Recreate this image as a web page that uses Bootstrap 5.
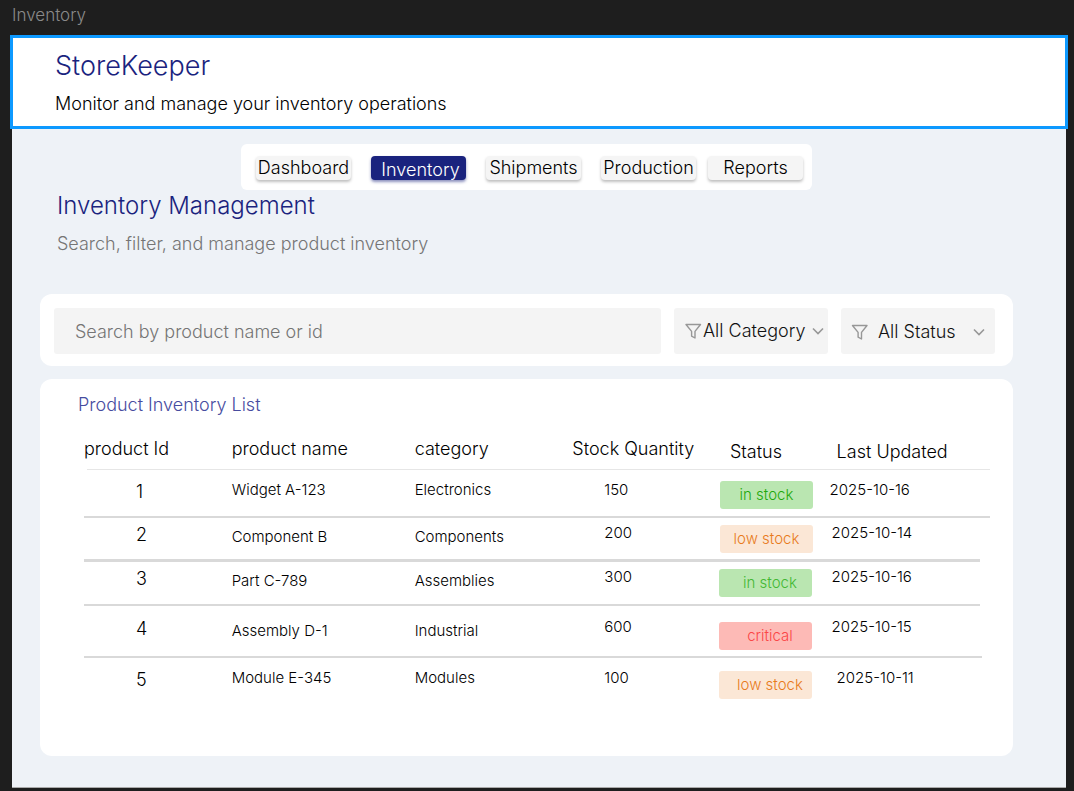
<!DOCTYPE html>
<html lang="en">
<head>
<meta charset="utf-8">
<meta name="viewport" content="width=device-width, initial-scale=1">
<title>StoreKeeper – Inventory</title>
<link href="https://cdn.jsdelivr.net/npm/bootstrap@5.3.0/dist/css/bootstrap.min.css" rel="stylesheet">
<style>
  :root { --navy: #1a237e; --field: #f4f4f4; }
  body { background: #1e1e1e; color: #000; font-family: Inter, "Liberation Sans", sans-serif; font-size: 18px; font-weight: 300; line-height: 26px; }
  .canvas { padding: 0 8px 4px 12px; }
  .frame-label { color: #8a8a8a; font-size: 17px; line-height: 20px; padding: 5px 0 12px; }
  .frame { background: #eef2f7; border-bottom: 1px solid #aaa; }
  .app-header { background: #fff; outline: 3px solid #0d99ff; outline-offset: -1px; padding: 12px 43px 10px; }
  .app-header h1 { color: var(--navy); font-size: 27px; font-weight: 300; line-height: 34px; margin-bottom: 8px; }
  .app-main { padding: 17px 53px 31px 28px; }
  .tabs { background: #fff; border-radius: 6px; padding: 12px 9px 10px 15px; gap: 20px; }
  .tab-btn { width: 95px; height: 24px; padding: 0; border: 0; border-radius: 4px; background: #f5f5f5; color: #000; font-size: 18px; font-weight: 300; line-height: 24px; white-space: nowrap; box-shadow: 0 2px 3px rgba(0,0,0,.25); }
  .tab-btn:hover { background: #e8e8e8; color: #000; }
  .tab-btn.active, .tab-btn.active:hover { background: var(--navy); color: #fff; padding: 3px 0 0 4px; line-height: 21px; box-shadow: 0 2px 3px rgba(26,35,126,.5); }
  .tab-btn:last-child { margin-left: -8px; }
  .page-head { padding-left: 17px; margin-bottom: 37px; }
  .page-head h2 { color: var(--navy); font-size: 24px; font-weight: 300; line-height: 32px; margin-bottom: 9px; }
  .page-head p { color: #757575; }
  .panel { background: #fff; border-radius: 12px; }
  .filters { padding: 14px 18px 12px 14px; gap: 13px; margin-bottom: 13px; }
  .field { background: var(--field); border: 0; border-radius: 3px; height: 46px; }
  .search { flex: 1 1 0; min-width: 0; padding: 0 21px; font-size: 18px; font-weight: 300; color: #000; }
  .search::placeholder { color: #757575; opacity: 1; }
  .picker { flex: 0 0 154px; padding: 2px 10px 0; }
  .picker-wide { padding: 0 4px 0 10px; }
  .picker select { appearance: none; border: 0; background: transparent; padding: 0; flex: 1 1 0; min-width: 0; font-size: 18px; font-weight: 300; color: #111; }
  .picker svg { flex: none; pointer-events: none; fill: none; stroke: #979797; }
  .list-panel { padding: 13px 23px 42px 44px; }
  .list-panel h3 { color: #474c9f; font-size: 18px; font-weight: 300; line-height: 26px; margin: 0 0 20px -6px; }
  .stock { --bs-table-bg: transparent; --bs-table-color: #000; table-layout: fixed; font-size: 15px; font-weight: 300; line-height: 20px; margin: 0; }
  .stock > :not(caption) > * > * { border: 0; padding: var(--top, 10px) 0 0; vertical-align: top; white-space: nowrap; }
  .stock th { font-size: 18px; font-weight: 300; --top: 1px; }
  .stock th.low { --top: 4px; }
  .stock th.state { padding-left: 10px; }
  .stock tr { background: linear-gradient(#d9d9d9, #d9d9d9) no-repeat left bottom / var(--rule-w, 100%) var(--rule, 2px); }
  .stock thead tr { height: 32px; --rule: 1px; background-image: linear-gradient(#e6e6e6, #e6e6e6); background-position: right bottom; --rule-w: calc(100% - 3px); }
  .stock tbody tr { height: 48px; --chip: 11px; }
  .stock tbody tr.tight { height: 44px; --top: 5px; --chip: 7px; --rule-w: calc(100% - 10px); }
  .stock tbody tr.ruled { --rule: 3px; }
  .stock tbody tr.roomy { height: 52px; --top: 11px; --chip: 16px; --rule-w: calc(100% - 8px); }
  .stock tbody tr:last-child { height: 56px; --chip: 13px; --rule: 0px; }
  .stock tbody td.num { font-size: 18px; padding: calc(var(--top, 10px) + 2px) 0 0 52px; }
  .stock .tight td.item, .stock .roomy td.item { padding-top: calc(var(--top) + 4px); }
  .stock td.qty { padding-left: 32px; }
  .stock tbody td.state { padding-top: var(--chip); }
  .stock .tight td.date, .stock .roomy td.date { padding-left: 2px; }
  .stock tbody tr:last-child td.date, .stock th.date { padding-left: 7px; }
  .chip { display: block; width: 93px; height: 28px; border-radius: 3px; line-height: 27px; text-align: center; }
  .chip-in { background: #bae6b1; color: #1fa90c; }
  .chip-in-soft { background: #bae6b1; color: #43b834; padding-left: 9px; }
  .chip-low { background: #fbe7d6; color: #e87b1c; }
  .chip-critical { background: #fdbab6; color: #fb4646; padding-left: 9px; }
  .chip-shift { padding-left: 9px; }
  .later .chip { margin-left: -1px; }
</style>
<script src="https://cdn.jsdelivr.net/npm/bootstrap@5.3.0/dist/js/bootstrap.bundle.min.js"></script>
</head>
<body>
<div class="canvas">
  <div class="frame-label">Inventory</div>
  <div class="frame">
    <header class="app-header">
      <h1>StoreKeeper</h1>
      <p class="mb-0">Monitor and manage your inventory operations</p>
    </header>
    <main class="app-main">
      <div class="d-flex justify-content-center">
        <nav class="tabs d-flex" aria-label="Sections">
          <button type="button" class="btn tab-btn">Dashboard</button>
          <button type="button" class="btn tab-btn active" aria-current="page">Inventory</button>
          <button type="button" class="btn tab-btn">Shipments</button>
          <button type="button" class="btn tab-btn">Production</button>
          <button type="button" class="btn tab-btn">Reports</button>
        </nav>
      </div>
      <div class="page-head">
        <h2>Inventory Management</h2>
        <p class="mb-0">Search, filter, and manage product inventory</p>
      </div>
      <form class="panel filters d-flex">
        <input type="search" class="field search" placeholder="Search by product name or id" aria-label="Search by product name or id">
        <div class="field picker picker-wide d-flex align-items-center">
          <svg width="19" height="18" viewBox="0 0 19 18" stroke-width="1.4" stroke-linejoin="round" aria-hidden="true"><path d="M2 2.5h14.5L11 9.4V16L7.6 14.2V9.4Z"/></svg>
          <select aria-label="Category"><option>All Category</option><option>Electronics</option><option>Components</option><option>Assemblies</option><option>Industrial</option><option>Modules</option></select>
          <svg width="12" height="8" viewBox="0 0 12 8" stroke-width="1.6" aria-hidden="true"><path d="M1 1.5l5 5 5-5"/></svg>
        </div>
        <div class="field picker d-flex align-items-center">
          <svg class="me-2" width="19" height="18" viewBox="0 0 19 18" stroke-width="1.4" stroke-linejoin="round" aria-hidden="true"><path d="M1.5 2.5H16L10.5 9.4V16L7.1 14.2V9.4Z"/></svg>
          <select aria-label="Status"><option>All Status</option><option>in stock</option><option>low stock</option><option>critical</option></select>
          <svg width="12" height="8" viewBox="0 0 12 8" stroke-width="1.6" aria-hidden="true"><path d="M1 1.5l5 5 5-5"/></svg>
        </div>
      </form>
      <section class="panel list-panel">
        <h3>Product Inventory List</h3>
        <table class="table stock">
          <colgroup><col style="width:16.3%"><col style="width:20.2%"><col style="width:17.4%"><col style="width:16.3%"><col style="width:12.1%"><col></colgroup>
          <thead>
            <tr><th scope="col">product Id</th><th scope="col">product name</th><th scope="col">category</th><th scope="col">Stock Quantity</th><th scope="col" class="low state">Status</th><th scope="col" class="low date">Last Updated</th></tr>
          </thead>
          <tbody>
            <tr><td class="num">1</td><td>Widget A-123</td><td>Electronics</td><td class="qty">150</td><td class="state"><span class="chip chip-in">in stock</span></td><td class="date">2025-10-16</td></tr>
            <tr class="tight ruled"><td class="num">2</td><td class="item">Component B</td><td class="item">Components</td><td class="qty">200</td><td class="state"><span class="chip chip-low">low stock</span></td><td class="date">2025-10-14</td></tr>
            <tr class="tight later"><td class="num">3</td><td class="item">Part C-789</td><td class="item">Assemblies</td><td class="qty">300</td><td class="state"><span class="chip chip-in-soft">in stock</span></td><td class="date">2025-10-16</td></tr>
            <tr class="roomy later"><td class="num">4</td><td class="item">Assembly D-1</td><td class="item">Industrial</td><td class="qty">600</td><td class="state"><span class="chip chip-critical">critical</span></td><td class="date">2025-10-15</td></tr>
            <tr class="later"><td class="num">5</td><td>Module E-345</td><td>Modules</td><td class="qty">100</td><td class="state"><span class="chip chip-low chip-shift">low stock</span></td><td class="date">2025-10-11</td></tr>
          </tbody>
        </table>
      </section>
    </main>
  </div>
</div>
</body>
</html>
